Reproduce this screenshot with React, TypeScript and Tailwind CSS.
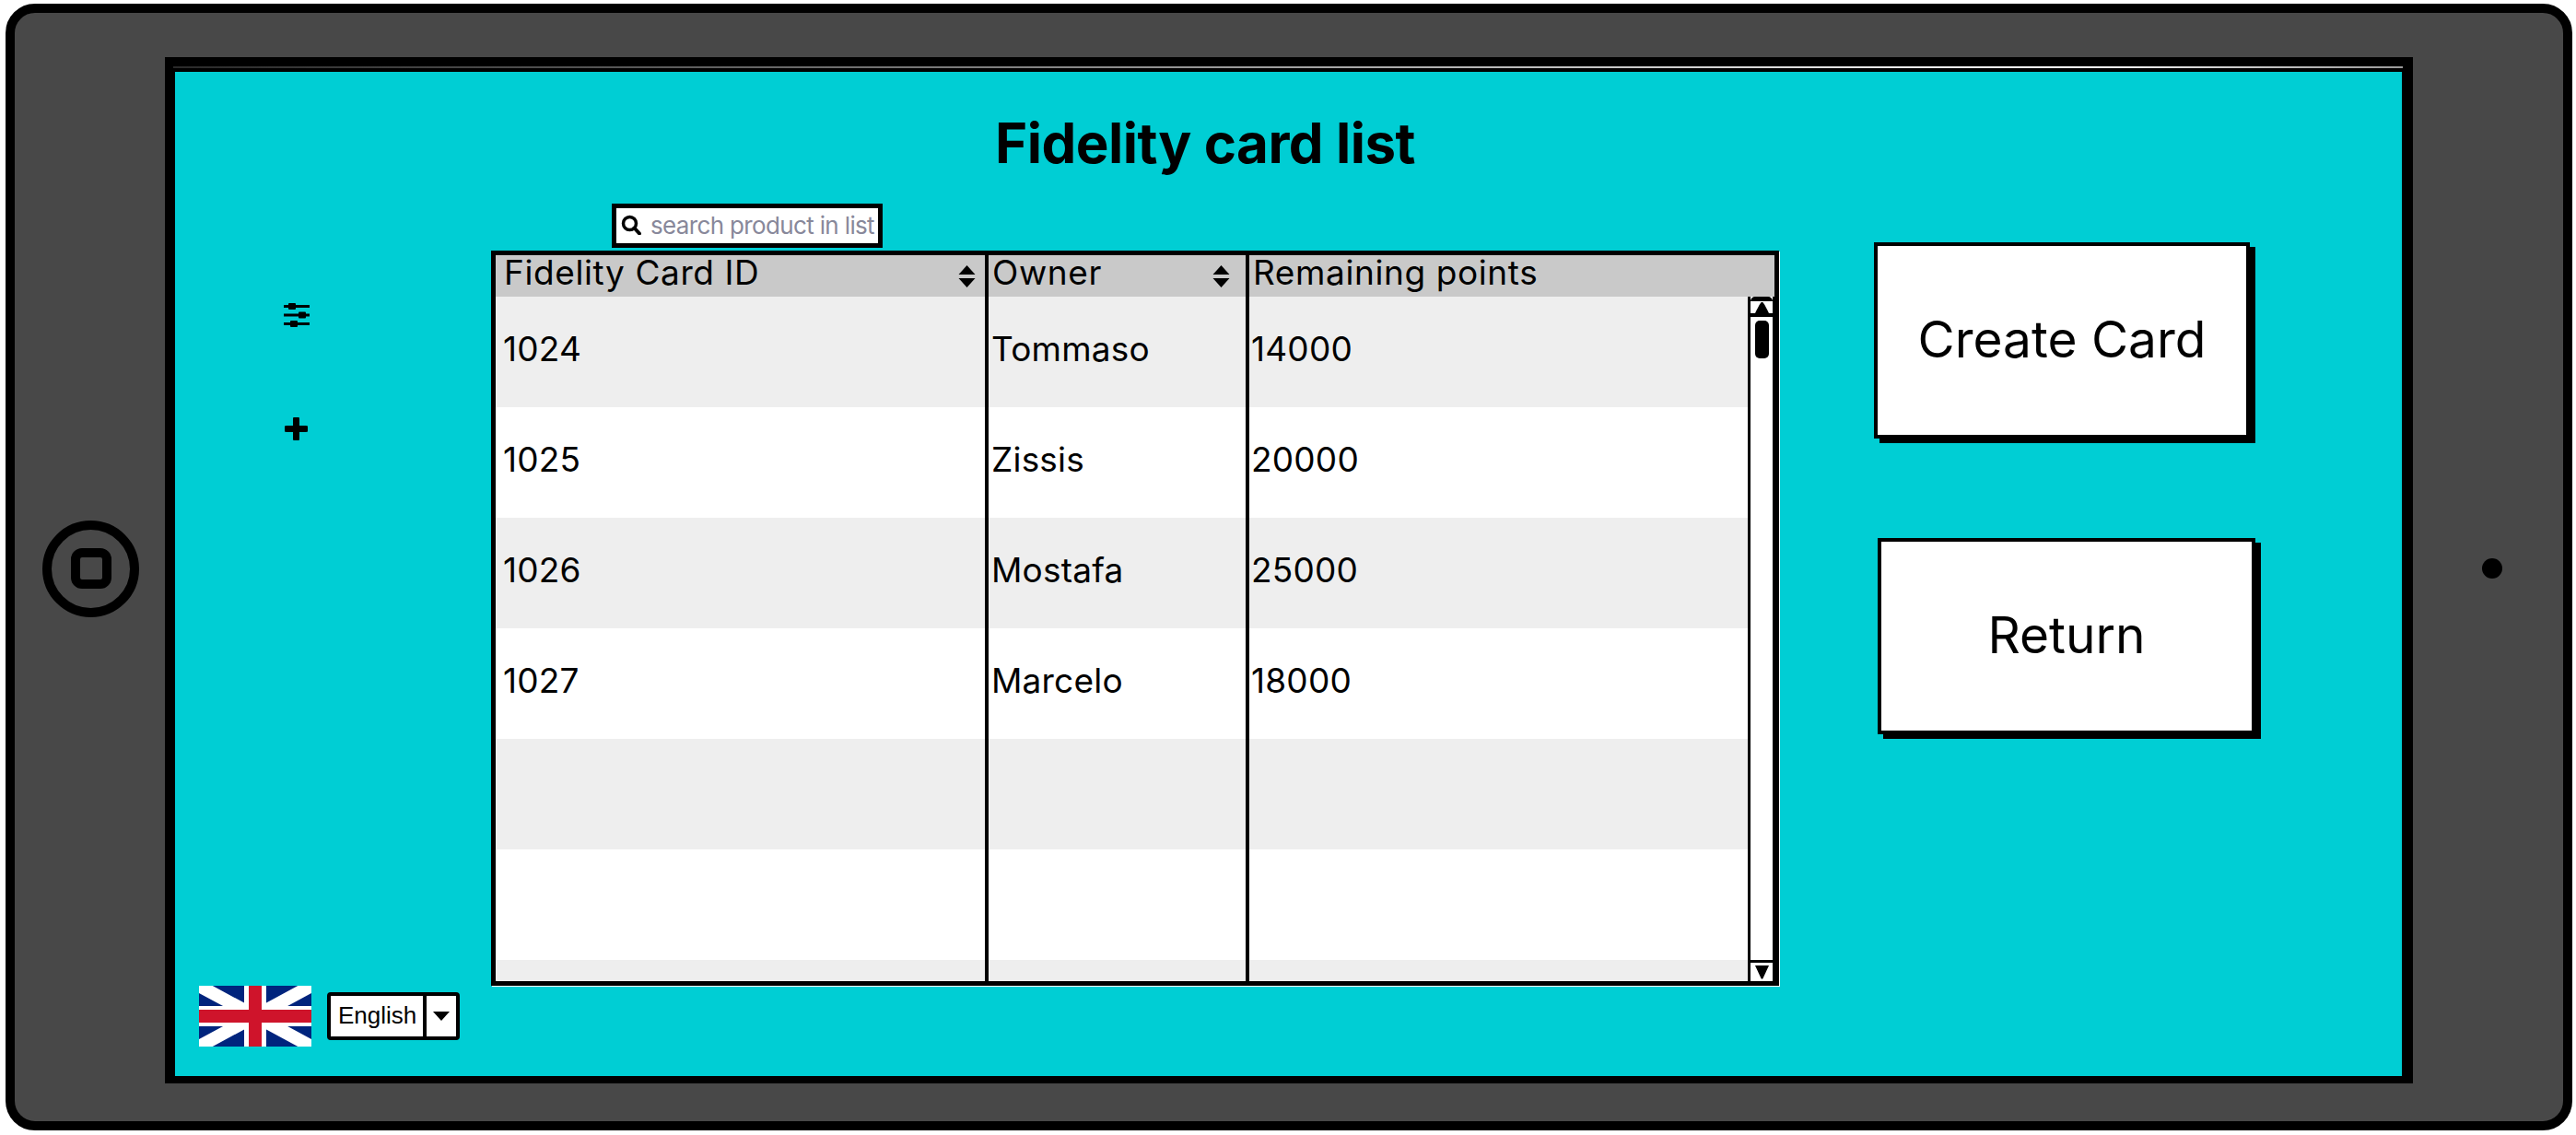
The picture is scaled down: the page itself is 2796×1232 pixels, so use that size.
const rows: [string, string, string][] = [
  ["1024", "Tommaso", "14000"],
  ["1025", "Zissis", "20000"],
  ["1026", "Mostafa", "25000"],
  ["1027", "Marcelo", "18000"],
  ["", "", ""],
  ["", "", ""],
  ["", "", ""],
];

function SortArrows() {
  return (
    <svg width="19" height="24" viewBox="0 0 19 24" className="shrink-0">
      <path d="M9.5 0 L18.5 10 H0.5 Z M0.5 14 H18.5 L9.5 24 Z" fill="#000" />
    </svg>
  );
}

function Flag() {
  return (
    <svg width="122" height="66" viewBox="0 0 122 66" className="block">
      <rect width="122" height="66" fill="#00247d" />
      <path d="M0 0 L122 66 M122 0 L0 66" stroke="#fff" strokeWidth="14" />
      <rect x="49" width="24" height="66" fill="#fff" />
      <rect y="22" width="122" height="22" fill="#fff" />
      <rect x="54" width="14" height="66" fill="#cf142b" />
      <rect y="26" width="122" height="14" fill="#cf142b" />
    </svg>
  );
}

function Sliders() {
  return (
    <svg width="28" height="27" viewBox="0 0 28 27" className="block">
      <path d="M0 3.5H28M0 13H28M0 22.5H28" stroke="#000" strokeWidth="3" />
      <rect x="5" y="0" width="8" height="7" rx="1" fill="#000" />
      <rect x="16" y="9.5" width="8" height="7" rx="1" fill="#000" />
      <rect x="7" y="19" width="8" height="7" rx="1" fill="#000" />
    </svg>
  );
}

function Plus() {
  return (
    <svg width="25" height="25" viewBox="0 0 25 25" className="block">
      <path d="M12.5 2V23M2 12.5H23" stroke="#000" strokeWidth="7" strokeLinecap="round" />
    </svg>
  );
}

function SearchIcon() {
  return (
    <svg width="22" height="22" viewBox="0 0 22 22" className="block shrink-0">
      <circle cx="9.5" cy="9.5" r="7" fill="none" stroke="#000" strokeWidth="3.5" />
      <path d="M14.5 14.5 L20 20.5" stroke="#000" strokeWidth="4" strokeLinecap="round" />
    </svg>
  );
}

function Scrollbar() {
  return (
    <div className="w-[29px] shrink-0 border-l-[3px] border-r-[2px] border-black bg-white flex flex-col">
      <div className="shrink-0 border-t-[5px] border-b-[4px] border-black bg-white flex items-center justify-center rounded-t-[5px]">
        <div className="h-[13px] flex items-center">
          <svg width="15" height="12" viewBox="0 0 15 12" className="block">
            <path d="M7.5 0 C9 0 10 2 15 12 H0 C5 2 6 0 7.5 0Z" fill="#000" />
          </svg>
        </div>
      </div>
      <div className="flex-1 flex flex-col items-center pt-[4px]">
        <div className="w-[15px] h-[41px] ml-[1px] bg-black rounded-[5px]" />
      </div>
      <div className="h-[23px] shrink-0 border-t-[3px] border-black flex items-center justify-center">
        <svg width="15" height="15" viewBox="0 0 15 15" className="block">
          <path d="M0 0 H15 L8.5 14 C8 15 7 15 6.5 14Z" fill="#000" />
        </svg>
      </div>
    </div>
  );
}

function Table() {
  return (
    <div className="w-[1398px] h-[798px] border-[5px] border-black bg-white flex flex-col font-['Inter',sans-serif] text-[37px] tracking-[0.2px] leading-[44px] text-black shadow-[1px_1px_0_#fff]">
      <div className="h-[45px] shrink-0 grid grid-cols-[535px_283px_1fr] bg-[#c9c9c9] leading-[30px] tracking-[0.6px]">
        <div className="border-r-[4px] border-black pl-[9px] pr-[10px] flex items-center justify-between">
          <span className="pb-[7px]">Fidelity Card ID</span>
          <SortArrows />
        </div>
        <div className="border-r-[4px] border-black pl-[4px] pr-[17px] flex items-center justify-between">
          <span className="pb-[7px]">Owner</span>
          <SortArrows />
        </div>
        <div className="pl-[4px] flex items-center">
          <span className="pb-[7px]">Remaining points</span>
        </div>
      </div>
      <div className="flex-1 flex min-h-0">
        <div className="flex-1 overflow-hidden">
          {rows.map((r, i) => (
            <div
              key={i}
              className={`h-[120px] grid grid-cols-[535px_283px_1fr] ${i % 2 === 0 ? "bg-[#eeeeee]" : "bg-white"}`}
            >
              <div className="border-r-[4px] border-black pl-[8px] pb-[6px] flex items-center">{r[0]}</div>
              <div className="border-r-[4px] border-black pl-[3px] pb-[6px] flex items-center">{r[1]}</div>
              <div className="pl-[2px] pb-[6px] flex items-center">{r[2]}</div>
            </div>
          ))}
        </div>
        <Scrollbar />
      </div>
    </div>
  );
}

function CardButton({ label, className }: { label: string; className: string }) {
  return (
    <button
      className={`h-[213px] bg-white border-[4px] border-black shadow-[6px_5px_0_#000] font-['Inter',sans-serif] text-[55px] pb-[2px] text-black ${className}`}
    >
      {label}
    </button>
  );
}

export default function App() {
  return (
    <div className="w-[2796px] h-[1232px] bg-white overflow-hidden pl-[6px] pt-[4px]">
      <div className="w-[2786px] h-[1223px] border-[10px] border-black rounded-[32px] bg-[#484848] flex pt-[48px]">
        <div className="w-[163px] h-[1114px] shrink-0 flex items-center pl-[30px] pb-[4px]">
          <div className="w-[105px] h-[105px] rounded-full border-[10px] border-black flex items-center justify-center">
            <div className="w-[44px] h-[44px] rounded-[12px] border-[10px] border-black" />
          </div>
        </div>

        <div className="relative w-[2440px] h-[1114px] shrink-0 border-l-[11px] border-t-[16px] border-r-[12px] border-b-[8px] border-black bg-[#00ced4] flex">
          <div className="absolute left-[-2px] right-[-1px] top-[-6px] h-[2px] bg-gradient-to-r from-[#2a2a2a] via-[#ffffff] via-[85%] to-[#999999]" />

          <div className="w-[343px] shrink-0 flex flex-col pt-[251px] pb-[32px]">
            <div className="ml-[118px]">
              <Sliders />
            </div>
            <div className="ml-[119px] mt-[97px]">
              <Plus />
            </div>
            <div className="mt-auto ml-[26px] flex items-end gap-[17px]">
              <Flag />
              <div className="w-[144px] h-[52px] mb-[7px] border-[4px] border-black rounded-[4px] bg-white flex font-['Liberation_Sans',sans-serif] text-[26px] text-black">
                <div className="flex-1 border-r-[4px] border-black pl-[8px] pb-[2px] flex items-center">English</div>
                <div className="w-[32px] shrink-0 flex items-center justify-center">
                  <svg width="18" height="10" viewBox="0 0 18 10" className="block">
                    <path d="M0 0H18L9 10Z" fill="#000" />
                  </svg>
                </div>
              </div>
            </div>
          </div>

          <div className="w-[1398px] shrink-0 flex flex-col">
            <h1 className="ml-[547px] mt-[42px] mb-[-7px] h-[70px] text-[60px] tracking-[-0.5px] leading-[70px] font-bold text-black font-['Inter',sans-serif] whitespace-nowrap">
              Fidelity card list
            </h1>
            <div className="ml-[131px] mt-[38px] mb-[3px] w-[294px] h-[48px] border-[5px] border-black bg-white flex items-center gap-[10px] pl-[5px] pb-[2px] font-['Inter',sans-serif] text-[26px] tracking-[-0.65px] text-[#88889a] whitespace-nowrap">
              <SearchIcon />
              <span>search product in list</span>
            </div>
            <Table />
          </div>

          <div className="ml-[103px] pt-[185px] flex flex-col gap-[108px]">
            <CardButton label="Create Card" className="w-[408px]" />
            <CardButton label="Return" className="w-[410px] ml-[4px]" />
          </div>
        </div>

        <div className="flex-1 h-[1114px] flex items-center pl-[75px] pb-[4px]">
          <div className="w-[22px] h-[22px] rounded-full bg-black" />
        </div>
      </div>
    </div>
  );
}
